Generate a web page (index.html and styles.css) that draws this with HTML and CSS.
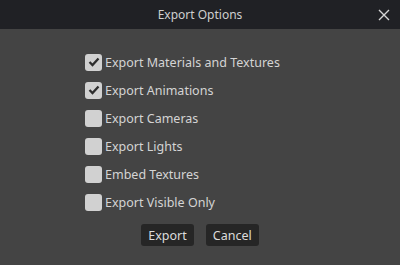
FILE: index.html
```html
<!DOCTYPE html>
<html lang="en">
<head>
    <meta charset="UTF-8">
    <title>Export Options</title>
    <link rel="stylesheet" href="styles.css">
</head>
<body>
    <div class="dialog">
        <header class="titlebar">
            <span class="title">Export Options</span>
            <span class="close">
                <svg width="12" height="12" viewBox="0 0 12 12"><path d="M1 1L11 11M11 1L1 11" stroke="#d6d6d6" stroke-width="1.4"/></svg>
            </span>
        </header>
        <main class="content">
            <ul class="options">
                <li><span class="box checked"><svg width="12" height="10" viewBox="0 0 12 10"><path d="M1.5 5L4.5 8L10.5 1.5" fill="none" stroke="#2e2e2e" stroke-width="2.3"/></svg></span>Export Materials and Textures</li>
                <li><span class="box checked"><svg width="12" height="10" viewBox="0 0 12 10"><path d="M1.5 5L4.5 8L10.5 1.5" fill="none" stroke="#2e2e2e" stroke-width="2.3"/></svg></span>Export Animations</li>
                <li><span class="box"></span>Export Cameras</li>
                <li><span class="box"></span>Export Lights</li>
                <li><span class="box"></span>Embed Textures</li>
                <li><span class="box"></span>Export Visible Only</li>
            </ul>
            <div class="buttons">
                <button class="btn">Export</button>
                <button class="btn">Cancel</button>
            </div>
        </main>
    </div>
</body>
</html>
```

FILE: styles.css
```css
body{
    margin: 0;
    padding: 0;
    background-color: #444444;
    font-family: "Noto Sans", sans-serif;
    font-size: 12.5px;
    color: #d4d4d4;
}
.dialog{
    width: 400px;
    height: 265px;
    display: flex;
    flex-direction: column;
}
.titlebar{
    height: 29px;
    background-color: #202125;
    display: flex;
    align-items: center;
    justify-content: center;
    position: relative;
}
.title{
    color: #cfcfcf;
    font-size: 12px;
}
.close{
    position: absolute;
    right: 10px;
    top: 9px;
    display: flex;
}
.content{
    flex: 1;
    display: flex;
    flex-direction: column;
    align-items: center;
}
.options{
    list-style: none;
    margin: 0;
    padding: 19px 0 0 0;
    width: 230px;
}
.options li{
    display: flex;
    align-items: center;
    height: 28px;
    gap: 3px;
}
.box{
    width: 17px;
    height: 17px;
    border-radius: 3px;
    background-color: #d1d1d1;
    display: flex;
    align-items: center;
    justify-content: center;
}
.buttons{
    display: flex;
    gap: 12px;
    margin-top: 8px;
}
.btn{
    font-family: "Noto Sans", sans-serif;
    font-size: 12.5px;
    color: #dcdcdc;
    background-color: #262626;
    border: none;
    border-radius: 3px;
    height: 22px;
    padding: 0 7px;
}
```
